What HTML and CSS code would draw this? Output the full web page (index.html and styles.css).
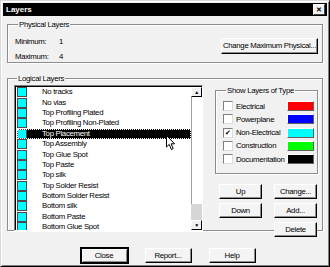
FILE: index.html
```html
<!DOCTYPE html>
<html lang="en">
<head>
    <meta charset="UTF-8">
    <title>Layers</title>
    <link rel="stylesheet" href="styles.css">
</head>
<body>
    <div class="window">
        <div class="titlebar">
            <span class="title">Layers</span>
            <span class="close-box">&#x2715;</span>
        </div>

        <fieldset class="group physical">
            <legend>Physical Layers</legend>
            <div class="counts">
                <span>Minimum:</span><span>1</span>
                <span>Maximum:</span><span>4</span>
            </div>
            <button class="btn wide">Change Maximum Physical...</button>
        </fieldset>

        <fieldset class="group logical">
            <legend>Logical Layers</legend>
            <div class="listbox">
                <ul class="layer-list">
                    <li class="layer"><span class="chip"></span>No tracks</li>
                    <li class="layer"><span class="chip"></span>No vias</li>
                    <li class="layer"><span class="chip"></span>Top Profiling Plated</li>
                    <li class="layer"><span class="chip"></span>Top Profiling Non-Plated</li>
                    <li class="layer selected"><span class="chip"></span>Top Placement</li>
                    <li class="layer"><span class="chip"></span>Top Assembly</li>
                    <li class="layer"><span class="chip"></span>Top Glue Spot</li>
                    <li class="layer"><span class="chip"></span>Top Paste</li>
                    <li class="layer"><span class="chip"></span>Top silk</li>
                    <li class="layer"><span class="chip"></span>Top Solder Resist</li>
                    <li class="layer"><span class="chip"></span>Bottom Solder Resist</li>
                    <li class="layer"><span class="chip"></span>Bottom silk</li>
                    <li class="layer"><span class="chip"></span>Bottom Paste</li>
                    <li class="layer"><span class="chip"></span>Bottom Glue Spot</li>
                </ul>
                <div class="scrollbar">
                    <span class="arrow up">&#9650;</span>
                    <span class="thumb"></span>
                    <span class="track"></span>
                    <span class="arrow down">&#9660;</span>
                </div>
                <svg class="pointer" width="11" height="16" viewBox="0 0 11 16">
                    <path d="M0.5 0.5 L0.5 12 L3.2 9.4 L5.4 14.5 L7.2 13.7 L5.1 8.8 L8.6 8.8 Z" fill="#fff" stroke="#000" stroke-width="1"/>
                </svg>
            </div>

            <div class="side">
                <fieldset class="group types">
                    <legend>Show Layers of Type</legend>
                    <div class="type-row"><span class="check"></span><span class="type-name">Electrical</span><span class="swatch red"></span></div>
                    <div class="type-row"><span class="check"></span><span class="type-name">Powerplane</span><span class="swatch blue"></span></div>
                    <div class="type-row"><span class="check checked">&#10004;</span><span class="type-name">Non-Electrical</span><span class="swatch cyan"></span></div>
                    <div class="type-row"><span class="check"></span><span class="type-name">Construction</span><span class="swatch green"></span></div>
                    <div class="type-row"><span class="check"></span><span class="type-name">Documentation</span><span class="swatch black"></span></div>
                </fieldset>
                <div class="actions">
                    <button class="btn">Up</button>
                    <button class="btn">Change...</button>
                    <button class="btn">Down</button>
                    <button class="btn">Add...</button>
                    <span></span>
                    <button class="btn">Delete</button>
                </div>
            </div>
        </fieldset>

        <div class="footer">
            <button class="btn default">Close</button>
            <button class="btn">Report...</button>
            <button class="btn">Help</button>
        </div>
    </div>
</body>
</html>
```

FILE: styles.css
```css
body {
    margin: 0;
    background: #fff;
    font-family: "Liberation Sans", Arial, sans-serif;
    font-size: 7.8px;
    letter-spacing: -0.3px;
    color: #000;
}

.window {
    width: 330px;
    height: 267px;
    box-sizing: border-box;
    background: #f1f1f1;
    border: 1px solid;
    border-color: #d8d8d8 #000 #000 #d8d8d8;
    box-shadow: inset 1px 1px 0 #fff, inset -1px -1px 0 #808080;
    padding: 2px;
    display: flex;
    flex-direction: column;
}

.titlebar {
    height: 13px;
    background: #000;
    color: #fff;
    display: flex;
    align-items: center;
    justify-content: space-between;
    padding: 0 2px 0 3px;
    flex-shrink: 0;
}

.title {
    font-weight: bold;
    font-size: 8px;
    letter-spacing: 0;
}

.close-box {
    width: 10px;
    height: 9px;
    background: #f1f1f1;
    color: #000;
    font-size: 7px;
    font-weight: bold;
    line-height: 9px;
    text-align: center;
    border: 1px solid;
    border-color: #fff #404040 #404040 #fff;
}

.group {
    margin: 0 4px;
    padding: 0;
    min-width: 0;
    border: 1px solid #8c8c8c;
    box-shadow: 1px 1px 0 #fff, inset 1px 1px 0 #fff;
}

.group legend {
    padding: 0 1px;
    margin-left: 3px;
    line-height: 9px;
}

.physical {
    margin-top: 4px;
    height: 43px;
    box-sizing: border-box;
    display: flex;
    align-items: flex-start;
    padding: 7px 4px 0 7px;
    flex-shrink: 0;
}

.counts {
    display: grid;
    grid-template-columns: 44px auto;
    row-gap: 5px;
    line-height: 10px;
    margin-top: 1px;
}

.btn {
    font-family: inherit;
    font-size: 7.8px;
    letter-spacing: -0.3px;
    white-space: nowrap;
    color: #000;
    background: #f4f4f4;
    border: 1px solid;
    border-color: #fff #000 #000 #fff;
    box-shadow: inset -1px -1px 0 #8c8c8c;
    padding: 0;
    height: 15px;
    line-height: 12px;
}

.wide {
    margin: 2px 0 0 auto;
    width: 97px;
    height: 16px;
}

.logical {
    margin-top: 11px;
    height: 157px;
    box-sizing: border-box;
    display: flex;
    align-items: flex-start;
    padding: 0 4px 0 6px;
    flex-shrink: 0;
}

.listbox {
    position: relative;
    width: 192px;
    height: 146px;
    box-sizing: border-box;
    margin-top: 2px;
    background: #fff;
    border: 1px solid;
    border-color: #808080 #fff #fff #808080;
    box-shadow: inset 1px 1px 0 #000;
    padding: 1px 0 0 2px;
    display: flex;
    overflow: hidden;
}

.layer-list {
    list-style: none;
    margin: 0;
    padding: 0;
    flex: 1;
}

.layer {
    height: 10.4px;
    line-height: 10px;
    display: flex;
    align-items: center;
    box-sizing: border-box;
    white-space: nowrap;
}

.chip {
    width: 8px;
    height: 8px;
    background: #00ffff;
    border: 1px solid #4a4a4a;
    margin-right: 15px;
}

.selected {
    background: #000;
    color: #fff;
    outline: 1px dotted #fff;
    outline-offset: -1px;
}

.scrollbar {
    width: 11px;
    display: flex;
    flex-direction: column;
    flex-shrink: 0;
}

.arrow {
    height: 10px;
    box-sizing: border-box;
    background: #f1f1f1;
    border: 1px solid;
    border-color: #fff #000 #000 #fff;
    font-size: 5px;
    line-height: 8px;
    text-align: center;
}

.thumb {
    flex: 1;
    background: #fff;
    border-left: 1px solid #a0a0a0;
}

.track {
    height: 16px;
    background: #d6d6d6;
}

.pointer {
    position: absolute;
    left: 151px;
    top: 49px;
}

.side {
    margin-left: 12px;
    width: 103px;
    flex-shrink: 0;
}

.types {
    margin: 3px 0 0;
    height: 88px;
    box-sizing: border-box;
    padding: 6px 3px 0 7px;
    display: flex;
    flex-direction: column;
    gap: 3.3px;
}

.type-row {
    display: flex;
    align-items: center;
    height: 10px;
    white-space: nowrap;
}

.check {
    width: 8px;
    height: 8px;
    background: #fff;
    border: 1px solid;
    border-color: #808080 #dcdcdc #dcdcdc #808080;
    font-size: 7px;
    line-height: 8px;
    text-align: center;
    margin-right: 3px;
    flex-shrink: 0;
}

.type-name {
    flex: 1;
}

.swatch {
    width: 25px;
    height: 8px;
    border: 1px solid;
    border-color: #fff #606060 #606060 #fff;
    flex-shrink: 0;
}

.red { background: #ff0000; }
.blue { background: #0000ff; }
.cyan { background: #00ffff; }
.green { background: #00ff00; }
.black { background: #000; }

.actions {
    display: grid;
    grid-template-columns: 43px 43px;
    column-gap: 12px;
    row-gap: 4px;
    margin: 10px 0 0 4px;
}

.footer {
    display: flex;
    justify-content: center;
    gap: 17px;
    margin-top: 17px;
    padding-left: 6px;
}

.footer .btn {
    width: 47px;
}

.default {
    border: 1px solid #000;
    outline: 1px solid #000;
    box-shadow: inset 1px 1px 0 #fff, inset -1px -1px 0 #8c8c8c;
}
```
